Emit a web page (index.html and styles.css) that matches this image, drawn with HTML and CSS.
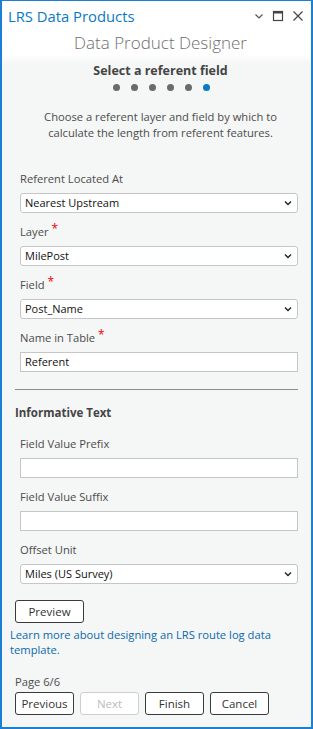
FILE: index.html
```html
<!DOCTYPE html>
<html lang="en">
<head>
  <meta charset="UTF-8" />
  <meta name="viewport" content="width=device-width, initial-scale=1.0" />
  <title>LRS Data Products</title>
  <link rel="stylesheet" href="styles.css">
</head>
<body>
  <div class="pane">
    <div class="titlebar">
      <span class="pane-title">LRS Data Products</span>
      <div class="pane-tools">
        <svg width="10" height="10" viewBox="0 0 10 10"><path d="M1.5 3.5 L5 7 L8.5 3.5" fill="none" stroke="#555" stroke-width="1.2"/></svg>
        <svg width="12" height="12" viewBox="0 0 12 12"><rect x="1.5" y="1.5" width="9" height="9" fill="none" stroke="#444" stroke-width="1.2"/><rect x="1.5" y="1.5" width="9" height="2" fill="#444"/></svg>
        <svg width="12" height="12" viewBox="0 0 12 12"><path d="M1.5 1.5 L10.5 10.5 M10.5 1.5 L1.5 10.5" fill="none" stroke="#444" stroke-width="1.2"/></svg>
      </div>
    </div>

    <div class="designer-head">
      <h1>Data Product Designer</h1>
      <h2>Select a referent field</h2>
      <div class="steps">
        <span class="dot"></span><span class="dot"></span><span class="dot"></span>
        <span class="dot"></span><span class="dot"></span><span class="dot active"></span>
      </div>
    </div>

    <p class="intro">Choose a referent layer and field by which to calculate the length from referent features.</p>

    <div class="form main-form">
      <div class="field">
        <span class="label">Referent Located At</span>
        <span class="select">Nearest Upstream</span>
      </div>
      <div class="field">
        <span class="label">Layer <b class="req">*</b></span>
        <span class="select">MilePost</span>
      </div>
      <div class="field">
        <span class="label">Field <b class="req">*</b></span>
        <span class="select">Post_Name</span>
      </div>
      <div class="field">
        <span class="label">Name in Table <b class="req">*</b></span>
        <span class="textbox">Referent</span>
      </div>
    </div>

    <hr class="sep">

    <h3 class="group">Informative Text</h3>

    <div class="form">
      <div class="field">
        <span class="label">Field Value Prefix</span>
        <span class="textbox"></span>
      </div>
      <div class="field">
        <span class="label">Field Value Suffix</span>
        <span class="textbox"></span>
      </div>
      <div class="field">
        <span class="label">Offset Unit</span>
        <span class="select">Miles (US Survey)</span>
      </div>
    </div>

    <div class="preview-row">
      <button class="btn">Preview</button>
    </div>

    <a class="learn" href="#">Learn more about designing an LRS route log data template.</a>

    <div class="footer">
      <div class="page-no">Page 6/6</div>
      <div class="nav">
        <button class="btn">Previous</button>
        <button class="btn" disabled>Next</button>
        <button class="btn">Finish</button>
        <button class="btn">Cancel</button>
      </div>
    </div>
  </div>
</body>
</html>
```

FILE: styles.css
```css
body {
  margin: 0;
  font-family: "Segoe UI", "Open Sans", sans-serif;
  font-size: 11.2px;
  color: #4c4c4c;
}
.pane {
  width: 313px;
  height: 729px;
  box-sizing: border-box;
  border: 2px solid #1b80d3;
  border-top-width: 1px;
  background: #f5f6f6;
}
.titlebar {
  height: 29px;
  background: #fff;
  display: flex;
  align-items: center;
  justify-content: space-between;
  padding: 0 7px 0 6px;
}
.pane-title {
  font-size: 14.8px;
  color: #0a79c5;
}
.pane-tools {
  display: flex;
  gap: 8px;
  align-items: center;
}
.designer-head {
  background: linear-gradient(#fff 0, #fff 24px, #f5f6f6 34px);
  text-align: center;
  padding-left: 8px;
}
.designer-head h1 {
  margin: 0;
  font-size: 17px;
  font-weight: 300;
  color: #6f6f6f;
  line-height: 26px;
}
.designer-head h2 {
  margin: 6px 0 0;
  font-size: 12.5px;
  font-weight: bold;
  color: #444;
  line-height: 18px;
}
.steps {
  display: flex;
  justify-content: center;
  gap: 11px;
  margin-top: 4px;
  padding-left: 2px;
}
.dot {
  width: 7px;
  height: 7px;
  border-radius: 50%;
  background: #6b6b6b;
}
.dot.active {
  background: #0b79c6;
}
.intro {
  margin: 18px 20px 0 28px;
  text-align: center;
  line-height: 16px;
}
.form {
  padding: 0 13px 0 18px;
}
.main-form {
  margin-top: 30px;
}
.field {
  margin-bottom: 11px;
}
.label {
  display: block;
  height: 16px;
  line-height: 16px;
}
.req {
  color: #e00;
  font-weight: normal;
  font-size: 12px;
  line-height: 0;
  vertical-align: 3px;
}
.select, .textbox {
  display: block;
  height: 20px;
  box-sizing: border-box;
  margin-top: 6px;
  background: #fff;
  border: 1px solid #c6c6c6;
  padding: 0 4px;
  font-size: 11px;
  line-height: 18px;
  color: #111;
}
.select {
  border-radius: 3px;
  background: #fff url("data:image/svg+xml,%3Csvg xmlns='http://www.w3.org/2000/svg' width='8' height='6'%3E%3Cpath d='M1 1.5 L4 4.5 L7 1.5' fill='none' stroke='%23222' stroke-width='1.4'/%3E%3C/svg%3E") no-repeat right 5px center;
}
.sep {
  margin: 17px 13px 0 13px;
  border: 0;
  border-top: 1px solid #8c8c8c;
}
.group {
  margin: 15px 0 15px 13px;
  height: 16px;
  line-height: 16px;
  font-size: 11.5px;
  font-weight: bold;
  color: #444;
}
.preview-row {
  padding: 5px 0 0 13px;
}
.btn {
  display: block;
  font-family: inherit;
  font-size: 11.5px;
  color: #333;
  background: #fff;
  border: 1px solid #3b3b3b;
  border-radius: 3px;
  height: 23px;
  padding: 0;
  width: 69px;
}
.btn:disabled {
  color: #bbb;
  border-color: #cfcfcf;
}
.learn {
  display: block;
  margin: 4px 8px 0 8px;
  line-height: 15px;
  color: #0a6aae;
  text-decoration: none;
}
.footer {
  padding: 17px 0 0 13px;
}
.page-no {
  height: 16px;
  line-height: 16px;
  margin-bottom: 2px;
}
.nav {
  display: flex;
  gap: 6px;
}
.nav .btn {
  width: 59px;
}
```
